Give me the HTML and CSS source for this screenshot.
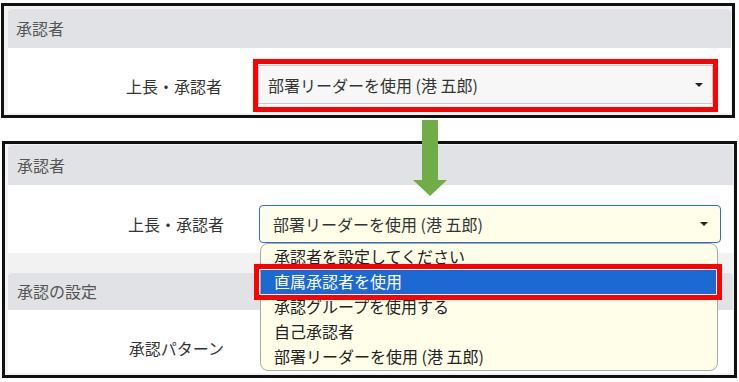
FILE: index.html
```
<!DOCTYPE html>
<html lang="ja">
<head>
  <meta charset="UTF-8" />
  <title>承認者の設定</title>
  <link rel="stylesheet" href="styles.css">
</head>
<body>
  <div class="shot">

    <div class="frame frame-before">
      <section class="panel">
        <div class="panel-head">承認者</div>
        <div class="panel-body body-before">
          <div class="row">
            <span class="label">上長・承認者</span>
            <div class="mark">
              <div class="select select-plain">
                <span>部署リーダーを使用 (港 五郎)</span>
                <span class="caret"></span>
              </div>
            </div>
          </div>
        </div>
      </section>
    </div>

    <svg class="arrow" width="34" height="77" viewBox="0 0 34 77">
      <polygon points="9,0 25,0 25,60 34,60 17,76 0,60 9,60" fill="#70ad47" />
    </svg>

    <div class="frame frame-after">
      <section class="panel">
        <div class="panel-head">承認者</div>
        <div class="panel-body body-after">
          <div class="row">
            <span class="label label-wide">上長・承認者</span>
            <div class="select select-open">
              <span>部署リーダーを使用 (港 五郎)</span>
              <span class="caret"></span>
              <ul class="options">
                <li>承認者を設定してください</li>
                <li class="picked">直属承認者を使用<span class="picked-mark"></span></li>
                <li>承認グループを使用する</li>
                <li>自己承認者</li>
                <li>部署リーダーを使用 (港 五郎)</li>
              </ul>
            </div>
          </div>
        </div>
      </section>

      <section class="panel panel-next">
        <div class="panel-head head-short">承認の設定</div>
        <div class="panel-body body-next">
          <div class="row">
            <span class="label label-wide">承認パターン</span>
          </div>
        </div>
      </section>
    </div>

  </div>
</body>
</html>
```

FILE: styles.css
```
body {
  margin: 0;
  background-color: white;
  font-family: "Noto Sans CJK JP", "Noto Sans", sans-serif;
  font-size: 16px;
  color: #333;
}

.shot {
  position: relative;
  width: 739px;
  height: 382px;
}

.frame {
  box-sizing: border-box;
  border: 3px solid #111;
  background-color: #f2f2f2;
}

.frame-before {
  margin: 3px 0 0 1px;
  width: 734px;
  height: 115px;
  padding: 3px 1px 2px 4px;
}

.frame-after {
  margin: 23px 0 0 2px;
  width: 735px;
  height: 237px;
  padding: 1px 1px 2px 3px;
}

.panel {
  background-color: white;
  border-radius: 4px 4px 0 0;
}

.panel-next {
  margin-top: 20px;
}

.panel-head {
  height: 39px;
  line-height: 39px;
  padding-left: 8px;
  background-color: #e1e2e6;
  border-radius: 4px 4px 0 0;
  color: #555;
}

.frame-after .panel-head {
  height: 40px;
  line-height: 40px;
  padding-left: 9px;
}

.frame-after .head-short {
  height: 37px;
  line-height: 37px;
}

.body-before {
  height: 65px;
  padding-top: 11px;
  box-sizing: border-box;
}

.body-after {
  height: 68px;
  padding-top: 20px;
  box-sizing: border-box;
}

.body-next {
  height: 63px;
  padding-top: 19px;
  box-sizing: border-box;
}

.row {
  display: flex;
  align-items: center;
}

.label {
  width: 214px;
  text-align: right;
  margin-right: 31px;
}

.label-wide {
  width: 216px;
  margin-right: 35px;
  height: 38px;
  line-height: 38px;
}

.mark {
  width: 465px;
  box-sizing: border-box;
  border: 5px solid #ff0000;
  padding: 1px 0 3px 0;
}

.select {
  position: relative;
  display: flex;
  align-items: center;
  justify-content: space-between;
  box-sizing: border-box;
}

.select-plain {
  height: 39px;
  padding: 0 9px 0 9px;
  background-color: #f7f7f7;
  border: 1px solid #c9c9c9;
}

.select-open {
  width: 462px;
  height: 38px;
  padding: 0 12px 0 13px;
  background-color: #fefee9;
  border: 1px solid #2b6fd3;
  border-radius: 4px;
}

.caret {
  width: 0;
  height: 0;
  border-left: 4px solid transparent;
  border-right: 4px solid transparent;
  border-top: 4px solid #222;
}

.options {
  position: absolute;
  z-index: 2;
  top: 100%;
  left: 0;
  width: 458px;
  height: 128px;
  box-sizing: border-box;
  margin: 1px 0 0 0;
  padding: 0;
  list-style: none;
  background-color: #fefee9;
  border: 1px solid #a9a9a9;
  border-radius: 8px;
  color: #222;
}

.options li {
  position: relative;
  height: 25px;
  line-height: 25px;
  padding-left: 13px;
}

.options .picked {
  background-color: #1c69d4;
  color: white;
}

.picked-mark {
  position: absolute;
  top: -5px;
  left: -7px;
  right: -5px;
  bottom: -6px;
  border: 5px solid #ff0000;
  box-shadow: inset 0 0 0 1px white;
}

.arrow {
  position: absolute;
  z-index: 3;
  left: 413px;
  top: 117px;
}
```
